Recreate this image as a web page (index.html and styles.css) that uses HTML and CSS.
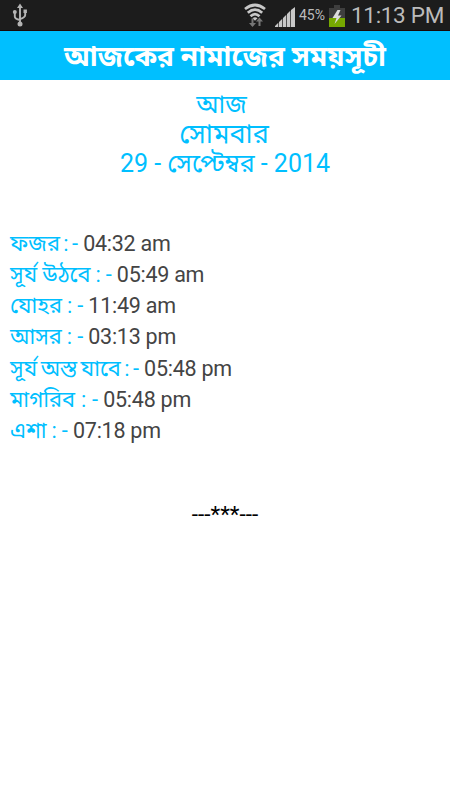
FILE: index.html
```html
<!DOCTYPE html>
<html lang="bn">
<head>
  <meta charset="UTF-8" />
  <meta name="viewport" content="width=device-width, initial-scale=1.0"/>
  <title>আজকের নামাজের সময়সূচী</title>
  <link rel="stylesheet" href="styles.css">
</head>
<body>

<div class="status-bar">
  <svg class="usb-icon" width="16" height="24" viewBox="0 0 16 24" fill="none" stroke="#b4b4b4" stroke-width="1.9">
    <path d="M8 4v16M2.8 10v3.5q0 2.5 5.2 3.5M13.2 9v3q0 2.5-5.2 4"/>
    <path d="M8 .5l3 4.5H5zM11.5 6.5h3.4v3.4h-3.4z" fill="#b4b4b4" stroke="none"/>
    <circle cx="2.8" cy="9" r="2" fill="#b4b4b4" stroke="none"/>
    <circle cx="8" cy="21" r="2.5" fill="#b4b4b4" stroke="none"/>
  </svg>
  <div class="status-right">
    <svg class="wifi-icon" width="22" height="24" viewBox="0 0 22 24" fill="none" stroke="#c8c8c8" stroke-width="2.7">
      <path d="M1 6Q11-2 21 6M3.8 9.700Q11 3.500 18.200 9.700M6.500 13.200Q11 9 15.500 13.200"/>
      <path d="M8.500 15.200q2.500-1.800 5 0l-2.500 2.500z" fill="#c8c8c8" stroke="none"/>
      <path d="M8.500 15.500v7M15.500 23v-6" stroke="#777" stroke-width="2"/>
      <path d="M5 20h7l-3.500 4zM12 18.500h7l-3.500-4z" fill="#777" stroke="none"/>
    </svg>
    <svg class="signal-icon" width="20" height="20" viewBox="0 0 20 20" fill="#c8c8c8">
      <path d="M0 20v-1l3.300-3.300V20zM4 20v-5l3.300-3.300V20zM8 20v-9l3.300-3.300V20zM12 20V7l3.300-3.300V20zM16 20V3l4-3v20z"/>
    </svg>
    <span class="battery-text">45%</span>
    <svg class="battery-icon" width="16" height="22" viewBox="0 0 16 22">
      <path d="M5 0h6v3h5v10H0V3h5z" fill="#3e3e3e"/>
      <path d="M0 13h16v9H0z" fill="#76a800"/>
      <path d="M8.500 5L3.500 13h4L5.500 19l7-8.500H9L11.500 5z" fill="#ddd"/>
    </svg>
    <span class="clock">11:13 PM</span>
  </div>
</div>

<h1 class="title">আজকের নামাজের সময়সূচী</h1>

<div class="date">
  <p class="today">আজ</p>
  <p class="weekday">সোমবার</p>
  <p>29 - সেপ্টেম্বর - 2014</p>
</div>

<ul class="times">
  <li><span class="name tight">ফজর : -</span> 04:32 am</li>
  <li><span class="name">সূর্য উঠবে : -</span> 05:49 am</li>
  <li><span class="name">যোহর : -</span> 11:49 am</li>
  <li><span class="name">আসর : -</span> 03:13 pm</li>
  <li><span class="name tight">সূর্য অস্ত যাবে : -</span> 05:48 pm</li>
  <li><span class="name wide">মাগরিব : -</span> 05:48 pm</li>
  <li><span class="name">এশা : -</span> 07:18 pm</li>
</ul>

<p class="divider">---***---</p>

</body>
</html>
```

FILE: styles.css
```css
body {
  margin: 0;
  background: #fff;
  font-family: Roboto, "Noto Sans", "Noto Sans Bengali", sans-serif;
}

p {
  margin: 0;
}

.status-bar {
  display: flex;
  justify-content: space-between;
  align-items: center;
  box-sizing: border-box;
  height: 31px;
  padding: 0 6px 0 12px;
  background: #1c1c1c;
  border-bottom: 1px solid #180808;
}

.status-right {
  display: flex;
  align-items: center;
}

.signal-icon {
  margin: 3px 4px 0 9px;
}

.battery-text {
  font-size: 14px;
  color: #bbb;
}

.battery-icon {
  margin: 1px 0 0 4px;
}

.clock {
  margin-left: 6px;
  font-size: 22.5px;
  letter-spacing: -0.3px;
  color: #bbb;
}

.title {
  height: 49px;
  margin: 0;
  background: #00bfff;
  color: #fff;
  font-size: 28px;
  line-height: 52px;
  text-align: center;
}

.date {
  padding-top: 10px;
  color: #00bfff;
  font-size: 25px;
  line-height: 29.5px;
  text-align: center;
}

.today {
  padding-right: 7px;
}

.weekday {
  padding-right: 2px;
  font-size: 27px;
}

.times {
  list-style: none;
  margin: 49px 0 0;
  padding: 0 10px;
  color: #444;
  font-size: 21.5px;
  letter-spacing: -0.25px;
  line-height: 31.3px;
}

.times li {
  height: 31.3px;
}

.name {
  color: #00bfff;
  font-size: 21.8px;
  letter-spacing: 0;
  word-spacing: -0.4px;
}

.tight {
  word-spacing: -2px;
}

.wide {
  word-spacing: 0.5px;
}

.divider {
  margin-top: 54px;
  color: #000;
  font-size: 22.5px;
  text-align: center;
}
```
